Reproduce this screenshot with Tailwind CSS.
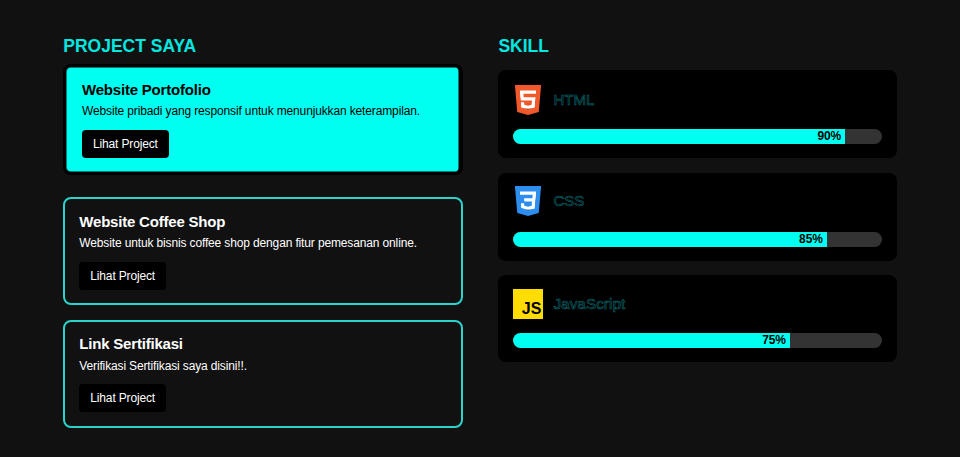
<!DOCTYPE html>
<html lang="en">
<head>
    <meta charset="UTF-8">
    <title>Project dan Skill</title>
    <script src="https://cdn.jsdelivr.net/npm/@tailwindcss/browser@4"></script>
</head>
<body class="bg-[#111111] font-['Liberation_Sans',Arial,sans-serif] h-[457px] overflow-hidden">
    <div class="flex gap-[35.5px] pl-[63.3px] pt-[36px]">
        <!-- Projects -->
        <section class="w-[399.6px]">
            <h2 class="text-[17.5px] leading-[20px] font-bold text-[#00e8e0] mb-[7.5px]">PROJECT SAYA</h2>

            <div class="mb-[22.3px] h-[111.5px] bg-[#00fff0] border-[3px] border-r-4 border-black shadow-[inset_0_0_0_0.5px_#000] rounded-[8px] pl-[15.7px] pr-[15px] pt-[13px] text-black">
                <h3 class="text-[15px] tracking-[-0.2px] leading-[19px] font-bold mb-[4.5px]">Website Portofolio</h3>
                <p class="text-[12px] tracking-[-0.14px] leading-[17px] mb-[9.5px]">Website pribadi yang responsif untuk menunjukkan keterampilan.</p>
                <button class="bg-black text-white text-[12px] tracking-[-0.15px] leading-[16px] rounded-[4px] px-[11px] h-[28px]">Lihat Project</button>
            </div>

            <div class="mb-[15px] h-[107.7px] border-2 border-[#2bd3c8] rounded-[8px] px-[14px] pt-[12.5px] text-white">
                <h3 class="text-[15px] tracking-[-0.2px] leading-[19px] font-bold mb-[4.5px]">Website Coffee Shop</h3>
                <p class="text-[12px] tracking-[-0.14px] leading-[17px] mb-[9.5px]">Website untuk bisnis coffee shop dengan fitur pemesanan online.</p>
                <button class="bg-black text-white text-[12px] tracking-[-0.15px] leading-[16px] rounded-[4px] px-[11px] h-[28px]">Lihat Project</button>
            </div>

            <div class="h-[107.7px] border-2 border-[#2bd3c8] rounded-[8px] px-[14px] pt-[12.5px] text-white">
                <h3 class="text-[15px] tracking-[-0.2px] leading-[19px] font-bold mb-[4.5px]">Link Sertifikasi</h3>
                <p class="text-[12px] tracking-[-0.14px] leading-[17px] mb-[9.5px]">Verifikasi Sertifikasi saya disini!!.</p>
                <button class="bg-black text-white text-[12px] tracking-[-0.15px] leading-[16px] rounded-[4px] px-[11px] h-[28px]">Lihat Project</button>
            </div>
        </section>

        <!-- Skills -->
        <section class="w-[398.6px]">
            <h2 class="text-[17.5px] leading-[20px] font-bold text-[#00e8e0] mb-[14px]">SKILL</h2>

            <div class="mb-[15px] h-[88px] bg-black rounded-[8px] px-[15px] pt-[15px]">
                <div class="flex items-center gap-[10px] h-[30px] mb-[14px]">
                    <svg class="w-[30px] h-[30px] shrink-0" viewBox="0 0 24 24">
                        <path fill="#ffffff" d="M5 3h14l-1.5 16H6.5z"/>
                        <path fill="#f1592a" fill-rule="evenodd" d="M1.5 0h21l-1.91 21.563L11.977 24l-8.565-2.438L1.5 0zm7.031 9.75l-.232-2.718 10.059.003.23-2.622L5.412 4.41l.698 8.01h9.126l-.326 3.426-2.91.804-2.955-.81-.188-2.11H6.248l.33 4.171L12 19.351l5.379-1.443.744-8.157H8.531z"/>
                    </svg>
                    <span class="text-[15px] text-black [-webkit-text-stroke:0.6px_#0a6a70]">HTML</span>
                </div>
                <div class="h-[15px] bg-[#333333] rounded-[8px] overflow-hidden">
                    <div class="h-full bg-[#00fff0] text-right pr-[4px] text-[12px] tracking-[-0.15px] leading-[15px] font-bold text-black" style="width:90%">90%</div>
                </div>
            </div>

            <div class="mb-[14px] h-[88px] bg-black rounded-[8px] px-[15px] pt-[13px]">
                <div class="flex items-center gap-[10px] h-[30px] mb-[16px]">
                    <svg class="w-[30px] h-[30px] shrink-0" viewBox="0 0 24 24">
                        <path fill="#ffffff" d="M5 3h14l-1.5 16H6.5z"/>
                        <path fill="#2d8ef0" fill-rule="evenodd" d="M1.5 0h21l-1.91 21.563L11.977 24l-8.564-2.438L1.5 0zm17.09 4.413L5.41 4.41l.213 2.622 10.125.002-.255 2.716h-6.64l.24 2.573h6.182l-.366 3.523-2.91.804-2.956-.81-.188-2.11h-2.61l.29 3.751L12 19.351l5.379-1.443.744-8.157.467-5.338z"/>
                    </svg>
                    <span class="text-[15px] text-black [-webkit-text-stroke:0.6px_#0a6a70]">CSS</span>
                </div>
                <div class="h-[15px] bg-[#333333] rounded-[8px] overflow-hidden">
                    <div class="h-full bg-[#00fff0] text-right pr-[4px] text-[12px] tracking-[-0.15px] leading-[15px] font-bold text-black" style="width:85%">85%</div>
                </div>
            </div>

            <div class="h-[87px] bg-black rounded-[8px] px-[15px] pt-[14px]">
                <div class="flex items-center gap-[10px] h-[30px] mb-[14px]">
                    <div class="w-[30px] h-[30px] shrink-0 bg-[#ffdd00] flex items-end justify-end pr-[2px] pb-[2px] text-[16px] leading-[16px] font-bold text-black">JS</div>
                    <span class="text-[15.4px] text-black [-webkit-text-stroke:0.6px_#0a6a70]">JavaScript</span>
                </div>
                <div class="h-[15px] bg-[#333333] rounded-[8px] overflow-hidden">
                    <div class="h-full bg-[#00fff0] text-right pr-[4px] text-[12px] tracking-[-0.15px] leading-[15px] font-bold text-black" style="width:75%">75%</div>
                </div>
            </div>
        </section>
    </div>
</body>
</html>
